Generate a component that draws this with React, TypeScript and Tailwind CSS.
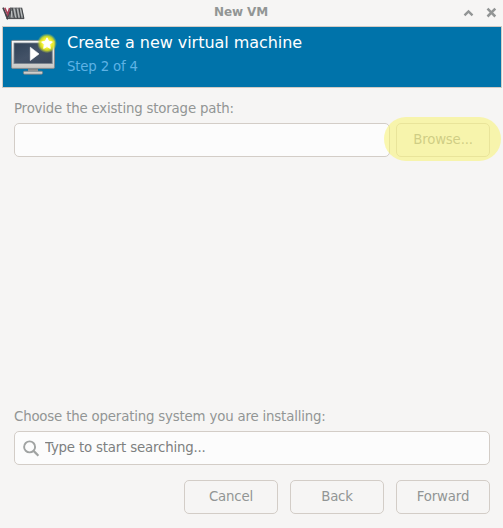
import type { ReactNode } from 'react';

function VmLogo() {
  return (
    <svg width="24" height="14" viewBox="0 0 24 14" fill="none" className="block">
      <path d="M8.3 1.5H19.8L22.2 12.8H4.4L3.4 9.5Z" fill="#8b8e90" />
      <path d="M1 1.6L5.3 12L8 5.5" stroke="#45454a" strokeWidth="1.7" />
      <path d="M2.8 1.8L5.7 8.4L7.6 2" stroke="#a83f58" strokeWidth="1.6" />
      <path d="M9 1.6L7.8 12.4M10.2 1.8L12.4 12.4M13.8 1.8L15.6 12.4M17 1.8L18.8 12.4M19.6 1.8L21.9 12.6" stroke="#44474a" strokeWidth="1.1" />
      <path d="M9.6 5L9.3 11M12.2 3L13.6 11M15.5 3L17 11M18.4 2.8L20 10.5" stroke="#bdc0c0" strokeWidth="1" />
      <path d="M4.5 12.6H22" stroke="#3f4244" strokeWidth="0.9" />
    </svg>
  );
}

function MonitorIcon() {
  return (
    <svg width="48" height="48" viewBox="0 0 48 48" className="block shrink-0">
      <defs>
        <linearGradient id="frame" x1="0" y1="0" x2="0" y2="1">
          <stop stopColor="#fafafa" />
          <stop offset="1" stopColor="#c7c7c5" />
        </linearGradient>
        <linearGradient id="screen" x1="0" y1="0" x2="1" y2="1">
          <stop stopColor="#304257" />
          <stop offset="0.5" stopColor="#435267" />
          <stop offset="1" stopColor="#3b485c" />
        </linearGradient>
        <linearGradient id="stand" x1="0" y1="0" x2="0" y2="1">
          <stop stopColor="#4e5355" />
          <stop offset="1" stopColor="#b5b6b5" />
        </linearGradient>
        <radialGradient id="glow">
          <stop stopColor="#fffde0" />
          <stop offset="0.5" stopColor="#f4f12c" />
          <stop offset="0.72" stopColor="#dde41e" stopOpacity="0.85" />
          <stop offset="1" stopColor="#aac850" stopOpacity="0" />
        </radialGradient>
      </defs>
      <path d="M19 36.5H29V40.5H19Z" fill="url(#stand)" />
      <rect x="14.4" y="40.2" width="19.2" height="3" rx="1.2" fill="#cfcecb" stroke="#777b7d" strokeWidth="0.8" />
      <rect x="2.5" y="9.4" width="43" height="28" rx="1.2" fill="url(#frame)" stroke="#82878a" strokeWidth="0.9" />
      <rect x="5" y="12" width="38.2" height="20.6" fill="url(#screen)" stroke="#7b858f" strokeWidth="0.8" />
      <path d="M21.3 16.2L30 22.9L21.3 29.5Z" fill="white" stroke="white" strokeWidth="0.6" />
      <circle cx="38" cy="12.3" r="10" fill="url(#glow)" />
      <path d="M38 6.8L39.7 10.3L43.4 10.9L40.7 13.6L41.3 17.4L38 15.6L34.7 17.4L35.3 13.6L32.6 10.9L36.3 10.3Z" fill="white" stroke="white" strokeWidth="0.9" strokeLinejoin="round" />
    </svg>
  );
}

function Button({ children }: { children: ReactNode }) {
  return (
    <button className="h-[34px] w-[94px] shrink-0 rounded-[5px] border border-[#d3cdc7] text-center leading-[30px] tracking-[-0.18px] text-[#929595]">
      {children}
    </button>
  );
}

export default function App() {
  return (
    <main className="flex h-[528px] w-[503px] flex-col overflow-hidden bg-[#f6f5f4] font-['DejaVu_Sans',sans-serif] text-[13.333px] tracking-[-0.18px] text-[#929595]">
      <header className="grid h-[26px] shrink-0 grid-cols-[80px_1fr_80px] items-center px-[2px]">
        <VmLogo />
        <h1 className="pr-[21px] pb-[2px] text-center text-[12px] leading-[22px] font-bold tracking-[-0.1px] text-[#929595]">New VM</h1>
        <div className="flex justify-end gap-[11px] pr-[4px]">
          <svg width="12" height="12" viewBox="0 0 12 12" fill="none" stroke="#929595" strokeWidth="2.4">
            <path d="M2.5 8.3L6.5 4.4L10.5 8.3" />
          </svg>
          <svg width="12" height="12" viewBox="0 0 12 12" fill="none" stroke="#929595" strokeWidth="2.5">
            <path d="M2.5 1.7L10.3 9.5M10.3 1.7L2.5 9.5" />
          </svg>
        </div>
      </header>
      <section className="mr-px ml-[2px] flex h-[62px] shrink-0 border border-[#d1cbc5] bg-[#0073aa] pt-[4px] pl-[6px]">
        <MonitorIcon />
        <div className="pt-px pl-[10px]">
          <h2 className="text-[16px] leading-[22px] tracking-[-0.04px] text-white">Create a new virtual machine</h2>
          <p className="pt-[3px] leading-[20px] text-[#5eb2e5]">Step 2 of 4</p>
        </div>
      </section>
      <section className="flex flex-1 flex-col pr-[13px] pb-[14px] pl-[14px]">
        <label htmlFor="path" className="mt-[11px] leading-[20px]">Provide the existing storage path:</label>
        <div className="mt-[4px] flex gap-[6px]">
          <input id="path" className="h-[34px] min-w-0 flex-1 rounded-[5px] border border-[#d3cdc7] bg-[#fcfcfc] px-2 outline-none" />
          <div className="relative">
            <Button>Browse...</Button>
            <div className="pointer-events-none absolute -top-[6px] -left-[12px] h-[44px] w-[117px] rounded-[22px] bg-[#f8f37b]/60" />
          </div>
        </div>
        <label htmlFor="os" className="mt-auto leading-[20px]">Choose the operating system you are installing:</label>
        <div className="mt-[4px] flex h-[34px] items-center rounded-[5px] border border-[#d3cdc7] bg-[#fcfcfc] pl-[8px]">
          <svg width="17" height="17" viewBox="0 0 17 17" fill="none" stroke="#a0a3a2" strokeWidth="1.9" className="shrink-0">
            <circle cx="6.6" cy="6.9" r="5.5" />
            <path d="M10.6 10.9L15.4 15.7" strokeWidth="2.2" />
          </svg>
          <input id="os" placeholder="Type to start searching..." className="min-w-0 flex-1 pl-[5px] leading-[20px] tracking-[-0.18px] outline-none placeholder:text-[#7d8080]" />
        </div>
        <footer className="mt-[15px] flex justify-end gap-[12px]">
          <Button>Cancel</Button>
          <Button>Back</Button>
          <Button>Forward</Button>
        </footer>
      </section>
    </main>
  );
}
